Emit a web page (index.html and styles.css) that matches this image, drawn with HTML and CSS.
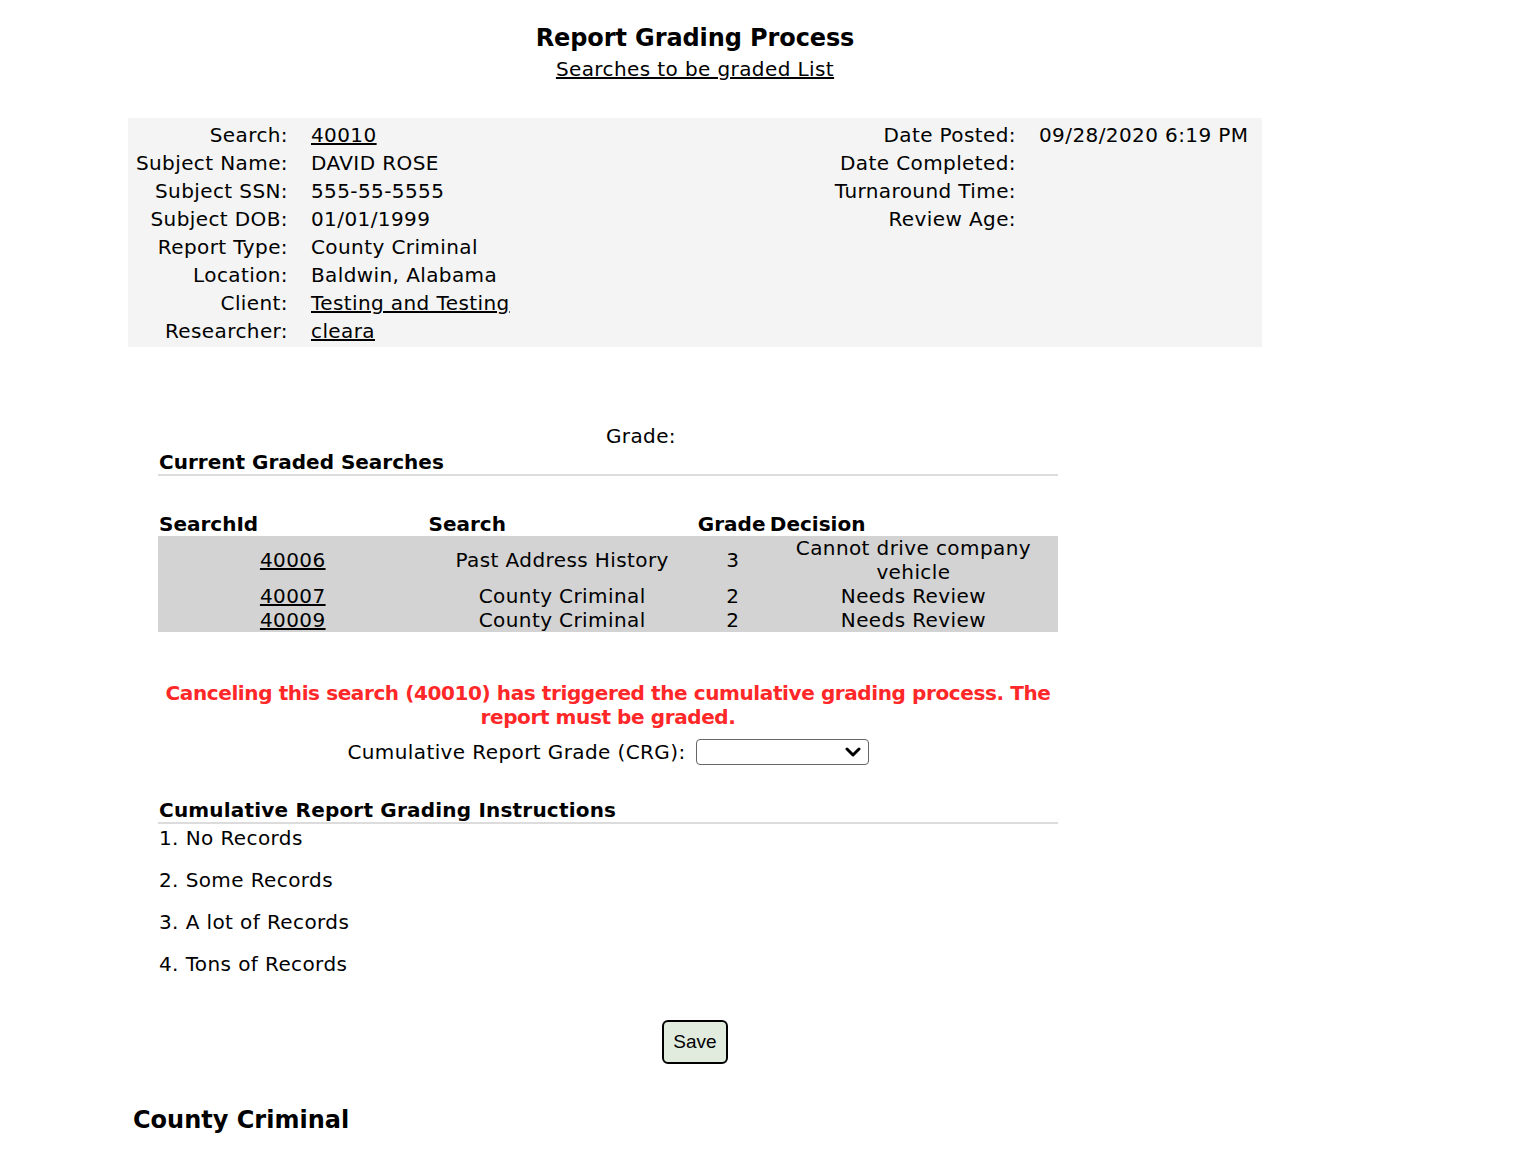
FILE: index.html
```html
<!DOCTYPE html>
<html lang="en">
<head>
    <meta charset="UTF-8">
    <meta name="viewport" content="width=device-width, initial-scale=1.0">
    <title>Report Grading Process</title>
    <link rel="stylesheet" href="styles.css">
</head>
<body>

<div class="page">
    <!-- page title -->
    <div class="title-block">
        <h1>Report Grading Process</h1>
        <a href="#" class="list-link">Searches to be graded List</a>
    </div>

    <!-- search summary -->
    <div class="summary">
        <div class="summary-left">
            <span class="lbl">Search:</span><span class="val"><a href="#">40010</a></span>
            <span class="lbl">Subject Name:</span><span class="val">DAVID ROSE</span>
            <span class="lbl">Subject SSN:</span><span class="val">555-55-5555</span>
            <span class="lbl">Subject DOB:</span><span class="val">01/01/1999</span>
            <span class="lbl">Report Type:</span><span class="val">County Criminal</span>
            <span class="lbl">Location:</span><span class="val">Baldwin, Alabama</span>
            <span class="lbl">Client:</span><span class="val"><a href="#">Testing and Testing</a></span>
            <span class="lbl">Researcher:</span><span class="val"><a href="#">cleara</a></span>
        </div>
        <div class="summary-right">
            <span class="lbl">Date Posted:</span><span class="val">09/28/2020 6:19 PM</span>
            <span class="lbl">Date Completed:</span><span class="val"></span>
            <span class="lbl">Turnaround Time:</span><span class="val"></span>
            <span class="lbl">Review Age:</span><span class="val"></span>
        </div>
    </div>

    <div class="grading">
        <div class="grade-row">
            <span class="grade-lbl">Grade:</span>
        </div>

        <h3 class="section-head first">Current Graded Searches</h3>

        <table class="graded">
            <thead>
                <tr>
                    <th class="c-id">SearchId</th>
                    <th class="c-search">Search</th>
                    <th class="c-grade">Grade</th>
                    <th class="c-decision">Decision</th>
                </tr>
            </thead>
            <tbody>
                <tr>
                    <td><a href="#">40006</a></td>
                    <td>Past Address History</td>
                    <td>3</td>
                    <td>Cannot drive company vehicle</td>
                </tr>
                <tr>
                    <td><a href="#">40007</a></td>
                    <td>County Criminal</td>
                    <td>2</td>
                    <td>Needs Review</td>
                </tr>
                <tr>
                    <td><a href="#">40009</a></td>
                    <td>County Criminal</td>
                    <td>2</td>
                    <td>Needs Review</td>
                </tr>
            </tbody>
        </table>

        <p class="warning">Canceling this search (40010) has triggered the cumulative grading process. The report must be graded.</p>

        <div class="crg-row">
            <label for="crg">Cumulative Report Grade (CRG):</label>
            <span class="select-wrap">
                <select id="crg">
                    <option></option>
                    <option>1</option>
                    <option>2</option>
                    <option>3</option>
                    <option>4</option>
                </select>
                <svg class="chevron" width="16" height="12" viewBox="0 0 16 12"><path d="M2 3 L8 9 L14 3" fill="none" stroke="#000" stroke-width="3" stroke-linecap="round" stroke-linejoin="round"/></svg>
            </span>
        </div>

        <h3 class="section-head">Cumulative Report Grading Instructions</h3>
        <ol class="instructions">
            <li>1. No Records</li>
            <li>2. Some Records</li>
            <li>3. A lot of Records</li>
            <li>4. Tons of Records</li>
        </ol>
    </div>

    <div class="actions">
        <button class="save-btn">Save</button>
    </div>

    <h2 class="report-head">County Criminal</h2>
</div>

</body>
</html>
```

FILE: styles.css
```css
body {
    margin: 0;
    padding: 0;
    font-family: Verdana, "DejaVu Sans", sans-serif;
    font-size: 20px;
    letter-spacing: 0.4px;
    color: #000;
    background: #fff;
}
a {
    color: #000;
}
.page {
    width: 1134px;
    margin-left: 128px;
}

/* title */
.title-block {
    text-align: center;
    padding-top: 23px;
}
.title-block h1 {
    margin: 0;
    font-size: 24px;
    line-height: 30px;
    font-weight: bold;
    letter-spacing: -0.1px;
}
.list-link {
    display: inline-block;
    margin-top: 2px;
    line-height: 28px;
}

/* summary box */
.summary {
    display: flex;
    justify-content: space-between;
    background-color: #f3f4f3;
    margin-top: 35px;
    padding: 3px 0 2px 0;
}
.summary-left,
.summary-right {
    display: grid;
    column-gap: 23px;
    grid-auto-rows: 28px;
    line-height: 28px;
    align-content: start;
}
.summary-left {
    grid-template-columns: 160px auto;
}
.summary-right {
    grid-template-columns: auto 223px;
}
.lbl {
    text-align: right;
    white-space: nowrap;
}
.val {
    white-space: nowrap;
}

/* grading area */
.grading {
    width: 900px;
    margin-left: 30px;
    margin-top: 75px;
}
.grade-row {
    display: flex;
}
.grade-lbl {
    width: 518px;
    text-align: right;
    line-height: 28px;
}
.section-head {
    margin: 0;
    font-size: 20px;
    line-height: 24px;
    font-weight: bold;
    letter-spacing: 0.2px;
    border-bottom: 2px solid #dcdcdc;
    padding-left: 1px;
}
.section-head.first {
    letter-spacing: 0;
}
.graded {
    width: 900px;
    border-spacing: 0;
    margin-top: 36px;
    font-size: 20px;
    line-height: 24px;
}
.graded th {
    text-align: left;
    padding: 0 1px;
    font-weight: bold;
    letter-spacing: 0;
}
.graded td {
    background-color: #d3d3d3;
    text-align: center;
    padding: 0;
}
.c-id { width: 270px; }
.c-search { width: 270px; }
.c-grade { width: 70px; }
.c-decision { width: 290px; }

.warning {
    margin: 49px 0 0 0;
    text-align: center;
    color: #ff2727;
    font-weight: bold;
    letter-spacing: -0.4px;
    line-height: 24px;
}
.crg-row {
    display: flex;
    justify-content: center;
    align-items: center;
    gap: 10px;
    margin-top: 9px;
    line-height: 28px;
}
.select-wrap {
    position: relative;
    display: inline-block;
}
.select-wrap select {
    appearance: none;
    -webkit-appearance: none;
    width: 173px;
    height: 26px;
    border: 1px solid #666;
    border-radius: 4px;
    background: #fff;
    display: block;
}
.chevron {
    position: absolute;
    right: 8px;
    top: 7px;
    pointer-events: none;
}
.crg-row + .section-head {
    margin-top: 32px;
}
.instructions {
    list-style: none;
    margin: 0;
    padding: 0 0 0 1px;
}
.instructions li {
    line-height: 28px;
    margin-bottom: 14px;
}

/* save */
.actions {
    text-align: center;
    margin-top: 42px;
}
.save-btn {
    font-family: "Liberation Sans", Arial, sans-serif;
    font-size: 19px;
    letter-spacing: 0;
    width: 66px;
    height: 44px;
    background-color: #e1ecdf;
    border: 2px solid #000;
    border-radius: 6px;
    color: #000;
    padding: 0;
}

.report-head {
    margin: 40px 0 0 5px;
    font-size: 24px;
    line-height: 32px;
    font-weight: bold;
    letter-spacing: 0;
}
```
